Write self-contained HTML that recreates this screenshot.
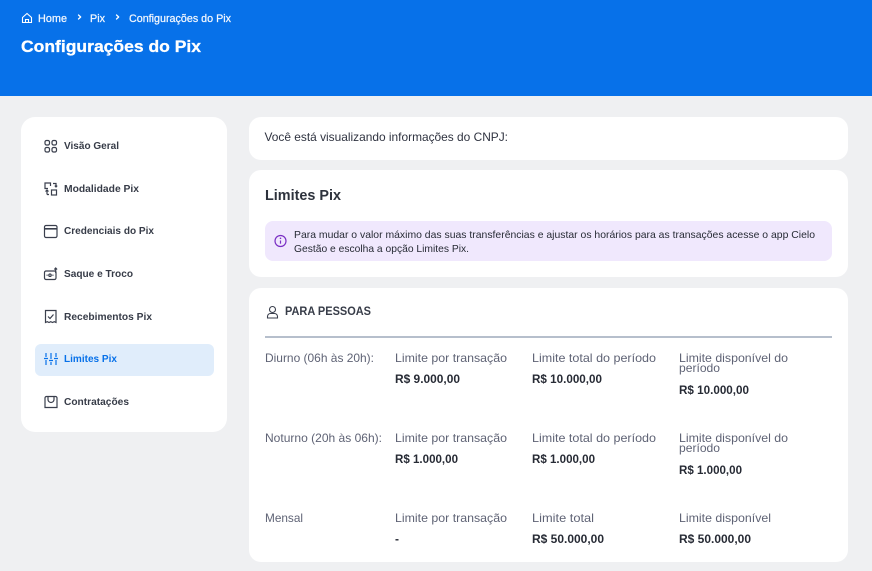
<!DOCTYPE html>
<html lang="pt-BR">
<head>
<meta charset="utf-8">
<title>Configurações do Pix</title>
<style>
html,body{margin:0;padding:0;width:872px;height:571px;overflow:hidden;background:#eff0f2}
body{position:relative;font-family:"Liberation Sans",sans-serif}
.header{position:absolute;left:0;top:0;width:872px;height:96px;background:#0771e9}
.card{position:absolute;background:#fff}
.svg{position:absolute;left:0;top:0}
text{font-family:"Liberation Sans",sans-serif}
.bc{font-size:11px;fill:#f2f7fe;stroke:#f2f7fe;stroke-width:.25}
.nav{font-size:10.5px;font-weight:700;fill:#373c48}
.lb{font-size:12px;fill:#5f6375}
.val{font-size:12px;font-weight:700;fill:#272b35}
.ic{fill:none;stroke:#3a3f4d;stroke-width:1.2}
</style>
</head>
<body>
<div class="header"></div>
<div class="card" style="left:21px;top:117px;width:206px;height:315px;border-radius:14px"></div>
<div class="card" style="left:35px;top:344px;width:179px;height:32px;border-radius:6px;background:#e0edfb"></div>
<div class="card" style="left:249px;top:117px;width:599px;height:43px;border-radius:12px"></div>
<div class="card" style="left:249px;top:170px;width:599px;height:107px;border-radius:12px"></div>
<div class="card" style="left:265px;top:221px;width:567px;height:40px;border-radius:8px;background:#f0e8fd"></div>
<div class="card" style="left:249px;top:288px;width:599px;height:274px;border-radius:12px"></div>
<div class="card" style="left:265px;top:336px;width:567px;height:2px;background:#b6bfcc"></div>

<svg class="svg" width="872" height="571" viewBox="0 0 872 571" xmlns="http://www.w3.org/2000/svg">
  <!-- breadcrumb -->
  <g fill="none" stroke="#fff" stroke-width="1.100">
    <path d="M22.500 17.500l4.500-4 4.500 4v5h-9z"/>
    <path d="M25.500 22.500v-3h3v3"/>
    <path d="M78.500 15l2.200 2-2.200 2M116.500 15l2.200 2-2.200 2" stroke-width="1.300" stroke-linecap="round" stroke-linejoin="round"/>
  </g>
  <text class="bc" x="38" y="22" textLength="29" lengthAdjust="spacingAndGlyphs">Home</text>
  <text class="bc" x="90" y="22" textLength="15" lengthAdjust="spacingAndGlyphs">Pix</text>
  <text class="bc" x="129" y="22" textLength="102" lengthAdjust="spacingAndGlyphs">Configurações do Pix</text>
  <text x="21" y="52" font-size="16.500" font-weight="700" fill="#fff" stroke="#fff" stroke-width=".3" textLength="180" lengthAdjust="spacingAndGlyphs">Configurações do Pix</text>

  <!-- nav icons -->
  <g class="ic">
    <rect x="45" y="140.500" width="4.500" height="4.500" rx="1.500"/><rect x="52" y="140.500" width="4.500" height="4.500" rx="1.500"/>
    <rect x="45" y="147.500" width="4.500" height="4.500" rx="1.500"/><rect x="52" y="147.500" width="4.500" height="4.500" rx="1.500"/>

    <path d="M48 188.500h-3v-5.500h5.500v3"/>
    <path d="M53 183.500h3v3.500M54.800 185.600l1.200 1.400 1.200-1.400"/>
    <path d="M47 194.500v-4M45.500 191.500l1.500-1.500 1.500 1.500M47 194.500h2"/>
    <rect x="51.500" y="190" width="5" height="5"/>

    <rect x="44.500" y="225.500" width="12.500" height="12" rx="1.500"/>
    <path d="M44.500 228.800h12.500" stroke-width="1.600"/>

    <rect x="44.500" y="271" width="11.500" height="8.500" rx="1.500"/>
    <circle cx="50" cy="275.200" r="1.200"/>
    <path d="M46.500 275.200h1.200M52.300 275.200h1.200M55.700 273v-5M54.300 269.500l1.400-1.500 1.400 1.500"/>

    <path d="M45.500 322.500v-12h10.500v12l-1.750-.8-1.750.8-1.750-.8-1.750.8-1.750-.8z"/>
    <path d="M48 316.500l2 2 3.500-4"/>

    <path d="M45 398v9.500h12V398a1.500 1.500 0 0 0-1.500-1.500h-9A1.500 1.500 0 0 0 45 398z"/>
    <path d="M48 396.500v3a3 3 0 0 0 6 0v-3"/>
  </g>
  <g fill="none" stroke="#0771e9" stroke-width="1.200">
    <path d="M46 353v4M46 360v5M44 358.500h4M51 353v6M51 362v3M49 360.500h4M56 353v4M56 360v5M54 358.500h4"/>
  </g>

  <!-- nav text -->
  <text class="nav" x="64" y="149" textLength="55" lengthAdjust="spacingAndGlyphs">Visão Geral</text>
  <text class="nav" x="64" y="192" textLength="75" lengthAdjust="spacingAndGlyphs">Modalidade Pix</text>
  <text class="nav" x="64" y="234" textLength="90" lengthAdjust="spacingAndGlyphs">Credenciais do Pix</text>
  <text class="nav" x="64" y="277" textLength="69" lengthAdjust="spacingAndGlyphs">Saque e Troco</text>
  <text class="nav" x="64" y="320" textLength="88" lengthAdjust="spacingAndGlyphs">Recebimentos Pix</text>
  <text class="nav" x="64" y="362" textLength="53" lengthAdjust="spacingAndGlyphs" style="fill:#0771e9">Limites Pix</text>
  <text class="nav" x="64" y="405" textLength="65" lengthAdjust="spacingAndGlyphs">Contratações</text>

  <!-- main -->
  <text x="264.500" y="141" font-size="12" fill="#2f3340" textLength="243.500" lengthAdjust="spacingAndGlyphs">Você está visualizando informações do CNPJ:</text>
  <text x="265" y="200" font-size="14.500" font-weight="700" fill="#2d323c" textLength="76" lengthAdjust="spacingAndGlyphs">Limites Pix</text>

  <circle cx="280.500" cy="241" r="5.500" fill="none" stroke="#7a2fc4" stroke-width="1.200"/>
  <path d="M280.500 240.500v3.200" stroke="#7a2fc4" stroke-width="1.200"/>
  <circle cx="280.500" cy="238.300" r=".8" fill="#7a2fc4"/>
  <text x="294" y="238" font-size="10.500" fill="#272b35" textLength="521" lengthAdjust="spacingAndGlyphs">Para mudar o valor máximo das suas transferências e ajustar os horários para as transações acesse o app Cielo</text>
  <text x="294" y="252" font-size="10.500" fill="#272b35" textLength="175" lengthAdjust="spacingAndGlyphs">Gestão e escolha a opção Limites Pix.</text>

  <g fill="none" stroke="#3a3f4d" stroke-width="1.100">
    <circle cx="272.500" cy="309.500" r="3"/>
    <path d="M267.500 318v-1.500a3 3 0 0 1 3-3h4a3 3 0 0 1 3 3v1.500z"/>
  </g>
  <text x="285" y="315" font-size="11.500" font-weight="700" fill="#373c48" textLength="86" lengthAdjust="spacingAndGlyphs">PARA PESSOAS</text>

  <!-- row 1 -->
  <text class="lb" x="265" y="362" textLength="109" lengthAdjust="spacingAndGlyphs">Diurno (06h às 20h):</text>
  <text class="lb" x="395" y="362" textLength="112" lengthAdjust="spacingAndGlyphs">Limite por transação</text>
  <text class="val" x="395" y="383" textLength="65" lengthAdjust="spacingAndGlyphs">R$ 9.000,00</text>
  <text class="lb" x="532" y="362" textLength="124" lengthAdjust="spacingAndGlyphs">Limite total do período</text>
  <text class="val" x="532" y="383" textLength="70" lengthAdjust="spacingAndGlyphs">R$ 10.000,00</text>
  <text class="lb" x="679" y="362" textLength="109" lengthAdjust="spacingAndGlyphs">Limite disponível do</text>
  <text class="lb" x="679" y="372" textLength="41" lengthAdjust="spacingAndGlyphs">período</text>
  <text class="val" x="679" y="394" textLength="70" lengthAdjust="spacingAndGlyphs">R$ 10.000,00</text>

  <!-- row 2 -->
  <text class="lb" x="265" y="442" textLength="117" lengthAdjust="spacingAndGlyphs">Noturno (20h às 06h):</text>
  <text class="lb" x="395" y="442" textLength="112" lengthAdjust="spacingAndGlyphs">Limite por transação</text>
  <text class="val" x="395" y="463" textLength="63" lengthAdjust="spacingAndGlyphs">R$ 1.000,00</text>
  <text class="lb" x="532" y="442" textLength="124" lengthAdjust="spacingAndGlyphs">Limite total do período</text>
  <text class="val" x="532" y="463" textLength="63" lengthAdjust="spacingAndGlyphs">R$ 1.000,00</text>
  <text class="lb" x="679" y="442" textLength="109" lengthAdjust="spacingAndGlyphs">Limite disponível do</text>
  <text class="lb" x="679" y="452" textLength="41" lengthAdjust="spacingAndGlyphs">período</text>
  <text class="val" x="679" y="474" textLength="63" lengthAdjust="spacingAndGlyphs">R$ 1.000,00</text>

  <!-- row 3 -->
  <text class="lb" x="265" y="522" textLength="38" lengthAdjust="spacingAndGlyphs">Mensal</text>
  <text class="lb" x="395" y="522" textLength="112" lengthAdjust="spacingAndGlyphs">Limite por transação</text>
  <text class="val" x="395" y="543">-</text>
  <text class="lb" x="532" y="522" textLength="62" lengthAdjust="spacingAndGlyphs">Limite total</text>
  <text class="val" x="532" y="543" textLength="72" lengthAdjust="spacingAndGlyphs">R$ 50.000,00</text>
  <text class="lb" x="679" y="522" textLength="92" lengthAdjust="spacingAndGlyphs">Limite disponível</text>
  <text class="val" x="679" y="543" textLength="72" lengthAdjust="spacingAndGlyphs">R$ 50.000,00</text>
</svg>
</body>
</html>
